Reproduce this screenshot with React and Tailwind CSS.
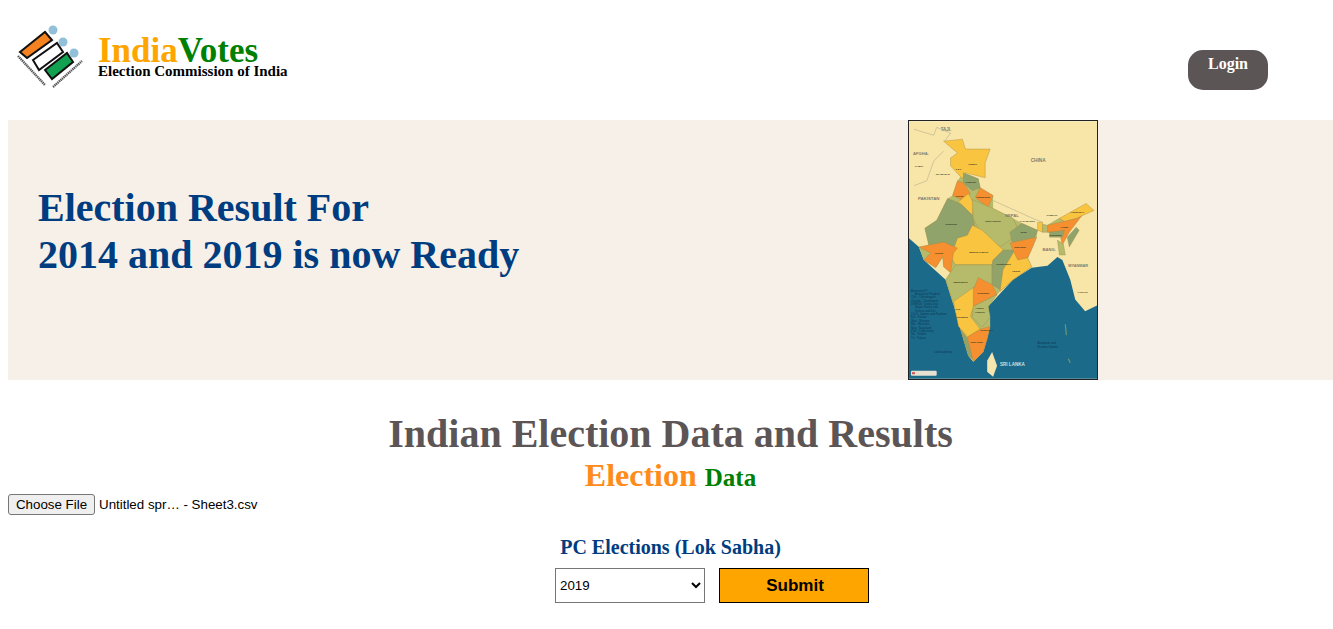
import React from "react";

const serif = "font-['Liberation_Serif',serif]";

const EciLogo = () => (
  <svg viewBox="14 22 72 72" className="w-[72px] h-[72px] shrink-0">
    <polygon points="20,52 45,32 52,40 27,58" fill="#f58220" stroke="#111" strokeWidth="2" />
    <polygon points="33,60 57,43 63,52 39,70" fill="#fff" stroke="#111" strokeWidth="2" />
    <polygon points="45,70 67,53 73,62 52,79" fill="#12a150" stroke="#111" strokeWidth="2" />
    <circle cx="53" cy="30" r="4.5" fill="#92c0d8" />
    <circle cx="63" cy="42" r="4.5" fill="#92c0d8" />
    <circle cx="74" cy="53" r="4.5" fill="#92c0d8" />
    <line x1="18" y1="56" x2="45" y2="85" stroke="#555" strokeWidth="2.4" strokeDasharray="1.4 0.6" />
    <line x1="53" y1="87" x2="82" y2="61" stroke="#555" strokeWidth="2.4" strokeDasharray="1.4 0.6" />
  </svg>
);

const indiaOutline =
  "44,75 39,78 28,100 16,108 20,125 10,127 15,140 27,148 34,137 35,147 42,153 37,160 45,185 52,210 60,237 65,243 75,233 79,220 82,207 82,198 80,187 89,175 92,172 105,160 124,147 120,138 125,127 129,117 130,110 114,103 105,98 85,88 85,75 72,67 70,58 55,52 49,60";

const regions = [
  ["35,20 54,18 57,28 82,28 77,42 77,57 57,52 54,58 42,45 42,37 49,32", "#f9c440"],
  ["55,52 70,58 72,67 64,70 55,62", "#8fa36b"],
  ["49,60 55,62 62,73 55,80 44,75", "#f58f2f"],
  ["72,67 85,75 80,87 67,77", "#f58f2f"],
  ["60,73 65,82 64,95 54,85 49,82", "#f9c440"],
  ["39,78 52,83 64,95 67,108 59,115 50,128 35,130 20,125 16,108 28,100", "#8fa36b"],
  ["64,79 85,88 105,98 112,112 105,118 92,127 72,112 65,98", "#b5bb6a"],
  ["64,105 74,110 92,127 99,133 85,140 84,145 47,145 42,137 49,118 59,115", "#f9c440"],
  ["10,127 35,122 49,128 45,133 42,153 35,147 34,137 27,148 15,140 22,133", "#f58f2f"],
  ["47,145 84,145 84,167 65,168 45,185 37,160", "#b5bb6a"],
  ["95,130 107,130 95,150 92,170 84,165 84,145 85,140", "#8fa36b"],
  ["95,150 107,130 120,138 124,147 105,160 92,172", "#f9c440"],
  ["102,123 129,117 125,127 120,138 110,140 105,130", "#f58f2f"],
  ["102,112 114,103 130,110 127,117 104,122", "#8fa36b"],
  ["70,158 84,165 89,175 65,187 65,170", "#f58f2f"],
  ["89,175 80,187 82,198 74,208 64,198 65,187", "#b5bb6a"],
  ["45,182 65,168 65,187 62,197 72,210 59,218 50,207", "#f9c440"],
  ["52,210 59,220 65,240 60,237", "#8fa36b"],
  ["59,218 72,210 82,207 79,220 75,233 65,243", "#f58f2f"],
  ["130,102 135,102 135,112 130,110", "#f9c440"],
  ["135,104 140,105 152,98 157,101 152,112 140,112 135,112", "#b5bb6a"],
  ["140,105 169,98 175,95 162,112 155,125 152,112 140,112", "#f58f2f"],
  ["152,98 179,83 187,90 169,98 157,101", "#f9c440"],
  ["142,112 157,110 155,117 142,117", "#8fa36b"],
  ["169,107 172,110 162,127 160,117", "#8fa36b"],
  ["150,120 156,124 158,135 152,135", "#b5bb6a"],
];

const labels = [
  ["TAJI.", 32, 10, 4.5],
  ["AFGHA.", 4, 34, 4.2],
  ["CHINA", 123, 41, 4.8],
  ["PAKISTAN", 9, 79, 4.4],
  ["NEPAL", 97, 97, 4.2],
  ["BANG.", 135, 131, 4.2],
  ["MYANMAR", 161, 147, 3.9],
];

const stateLabels = [
  ["J & K", 47, 49],
  ["Ladakh", 60, 44],
  ["Himachal", 57, 62],
  ["Punjab", 47, 76],
  ["Uttarakhand", 68, 77],
  ["Rajasthan", 37, 105],
  ["Uttar Pradesh", 77, 102],
  ["Bihar", 113, 113],
  ["Jharkhand", 106, 128],
  ["Gujarat", 26, 134],
  ["Madhya Pradesh", 61, 133],
  ["Chhattisgarh", 88, 145],
  ["Odisha", 104, 152],
  ["Maharashtra", 45, 163],
  ["Telangana", 69, 174],
  ["Goa", 47, 191],
  ["Andhra", 67, 190],
  ["Pradesh", 67, 194],
  ["Karnataka", 48, 199],
  ["Puducherry", 72, 212],
  ["Tamil Nadu", 62, 224],
  ["Assam", 153, 108],
  ["Arunachal P.", 163, 93],
  ["Meghalaya", 142, 116],
];

const legend = [
  "Arunachal P.:",
  "  Arunachal Pradesh",
  "Chh.: Chhattisgarh",
  "Chandi.: Chandigarh",
  "DNH/DD: Dadra and",
  "  Nagar Haveli and",
  "  Daman and Diu",
  "J & K: Jammu and Kashmir",
  "Ker.: Kerala",
  "Man.: Manipur",
  "Miz.: Mizoram",
  "Nag.: Nagaland",
  "Pud.: Puducherry",
  "Sik.: Sikkim",
  "Tri.: Tripura",
];

const IndiaMap = () => (
  <svg viewBox="0 0 190 260" className="w-[190px] h-[260px] shrink-0 border border-[#222] box-border">
    <rect width="190" height="260" fill="#f7e6a8" />
    <path d="M0 118 L10 127 L15 140 L37 160 L45 185 L52 210 L60 237 L65 243 L75 233 L82 207 L80 187 L105 160 L124 148 L140 146 L150 137 L155 140 L163 160 L168 180 L178 192 L190 186 L190 260 L0 260Z" fill="#1b6a8a" />
    <polygon points={indiaOutline} fill="#b5bb6a" />
    {regions.map(([points, fill], i) => (
      <polygon key={i} points={points} fill={fill} stroke="#a08a4a" strokeWidth="0.4" />
    ))}
    <polygon points="84,233 89,247 85,258 79,253 79,242" fill="#f5e6b0" />
    <path d="M158 205 L159 216 M161 240 L163 244" stroke="#6f9a6a" strokeWidth="1.2" />
    <path d="M5 8 L25 14 L28 6 L42 12 L36 20 M5 65 L18 60 L25 40 L35 30 M85 80 L125 98 L135 102" fill="none" stroke="#a9a28a" strokeWidth="0.5" />
    {labels.map(([label, x, y, size]) => (
      <text key={label} x={x} y={y} fontSize={size} fontWeight="700" fill="#7c7c70" fontFamily="Liberation Sans, sans-serif">
        {label}
      </text>
    ))}
    <text x="92" y="247" fontSize="4.6" fontWeight="700" fill="#cfe0e0" fontFamily="Liberation Sans, sans-serif">SRI LANKA</text>
    <g fill="#3a3a20" fontSize="2.4" fontWeight="700" fontFamily="Liberation Sans, sans-serif">
      {stateLabels.map(([label, x, y]) => (
        <text key={label} x={x} y={y}>{label}</text>
      ))}
      <text x="139" y="96">THIMPHU</text>
      <text x="112" y="102">KATHMANDU</text>
      <text x="6" y="46">KABUL</text>
      <text x="27" y="54">ISLAMABAD</text>
      <text x="170" y="173">YANGON</text>
    </g>
    <g fill="#0d3a55" fontFamily="Liberation Sans, sans-serif" fontSize="3">
      {legend.map((line, i) => (
        <text key={i} x={line.startsWith(" ") ? 6 : 2} y={172 + i * 3.4}>{line.trim()}</text>
      ))}
      <text x="25" y="234">Lakshadweep</text>
      <text x="130" y="225">Andaman and</text>
      <text x="130" y="229">Nicobar Islands</text>
    </g>
    <rect x="2" y="252" width="26" height="5" rx="1" fill="#e8e0d0" />
    <rect x="3" y="253.5" width="3" height="2" fill="#d05050" />
  </svg>
);

const App = () => {
  return (
    <div className={`min-h-[629px] bg-white pl-2 ${serif}`}>
      <header className="flex h-[120px] justify-between">
        <div className="flex items-start pl-[6px] pt-[22px]">
          <EciLogo />
          <div className="ml-3 pt-[12px]">
            <div className="text-[35px] font-bold leading-[34px]">
              <span className="text-[#ffa500]">India</span>
              <span className="text-[#008000]">Votes</span>
            </div>
            <div className="-mt-[5px] text-[15px] font-bold leading-4 text-black">
              Election Commission of India
            </div>
          </div>
        </div>
        <div className="pr-[65px] pt-[50px]">
          <button className="flex h-10 w-20 justify-center rounded-[15px] bg-[#5c5556] pt-[4px] text-base font-bold leading-5 text-white">
            Login
          </button>
        </div>
      </header>

      <section className="flex h-[260px] bg-[#f6f0e9]">
        <div className="w-[900px] pl-[30px] pt-[64px] text-[40px] font-bold leading-[47px] text-[#003d80]">
          <div>Election Result For</div>
          <div>2014 and 2019 is now Ready</div>
        </div>
        <IndiaMap />
      </section>

      <main>
        <h1 className="pt-[31px] text-center text-[40px] font-bold leading-[46px] text-[#5c5556]">
          Indian Election Data and Results
        </h1>
        <div className="h-[37px] text-center font-bold leading-[37px]">
          <span className="text-[32px] text-[#ff8c1a]">Election </span>
          <span className="text-[25px] text-[#008000]">Data</span>
        </div>
        <div className="flex h-[21px] items-center font-['Liberation_Sans',sans-serif] text-[13.33px] text-black">
          <button className="h-[21px] w-[87px] rounded-[3px] border border-[#767676] bg-[#efefef] leading-none">
            Choose File
          </button>
          <span className="ml-1">Untitled spr… - Sheet3.csv</span>
        </div>
        <div className="pt-[21px] text-center text-xl font-bold leading-[23px] text-[#003d80]">
          PC Elections (Lok Sabha)
        </div>
        <div className="flex gap-[14px] pl-[547px] pt-[9px] font-['Liberation_Sans',sans-serif]">
          <select defaultValue="2019" className="h-[35px] w-[150px] border border-[#767676] bg-white text-[13.33px] text-black appearance-auto">
            <option>2019</option>
            <option>2014</option>
          </select>
          <button className="h-[35px] w-[150px] border border-black bg-[#ffa500] pl-[2px] text-[17px] font-bold leading-none text-black">
            Submit
          </button>
        </div>
      </main>
    </div>
  );
};

export default App;
